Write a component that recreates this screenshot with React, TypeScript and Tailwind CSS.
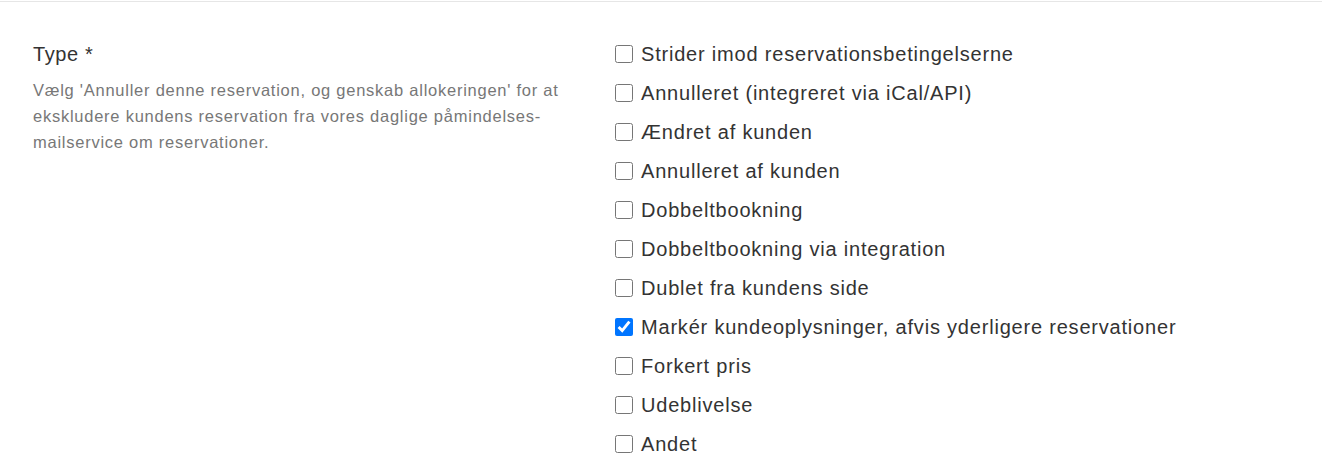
const options = [
  { label: "Strider imod reservationsbetingelserne", checked: false },
  { label: "Annulleret (integreret via iCal/API)", checked: false },
  { label: "Ændret af kunden", checked: false },
  { label: "Annulleret af kunden", checked: false },
  { label: "Dobbeltbookning", checked: false },
  { label: "Dobbeltbookning via integration", checked: false },
  { label: "Dublet fra kundens side", checked: false },
  { label: "Markér kundeoplysninger, afvis yderligere reservationer", checked: true },
  { label: "Forkert pris", checked: false },
  { label: "Udeblivelse", checked: false },
  { label: "Andet", checked: false },
];

export default function App() {
  return (
    <div className="w-full h-[471px] overflow-hidden bg-white" style={{ fontFamily: '"Liberation Sans", Arial, sans-serif' }}>
      <div className="border-t border-[#e6e6e6] mt-px" />
      <div className="flex pl-[33px]">
        <div className="w-[548px] flex-shrink-0 pt-[34px]">
          <div className="text-[20px] leading-[24px] tracking-[0.6px] text-[#333] mt-[6px]">Type *</div>
          <p className="mt-[11px] text-[16.5px] leading-[26px] tracking-[0.75px] text-[#777]">
            Vælg 'Annuller denne reservation, og genskab allokeringen' for at ekskludere kundens reservation fra vores daglige påmindelses-mailservice om reservationer.
          </p>
        </div>
        <div className="ml-[34px] pt-[32px] flex flex-col">
          {options.map((o, i) => (
            <label key={i} className="h-[39px] flex items-center gap-[8px] text-[20px] tracking-[0.8px] text-[#333]">
              <input type="checkbox" defaultChecked={o.checked} className="w-[18px] h-[18px] m-0" />
              <span>{o.label}</span>
            </label>
          ))}
        </div>
      </div>
    </div>
  );
}
